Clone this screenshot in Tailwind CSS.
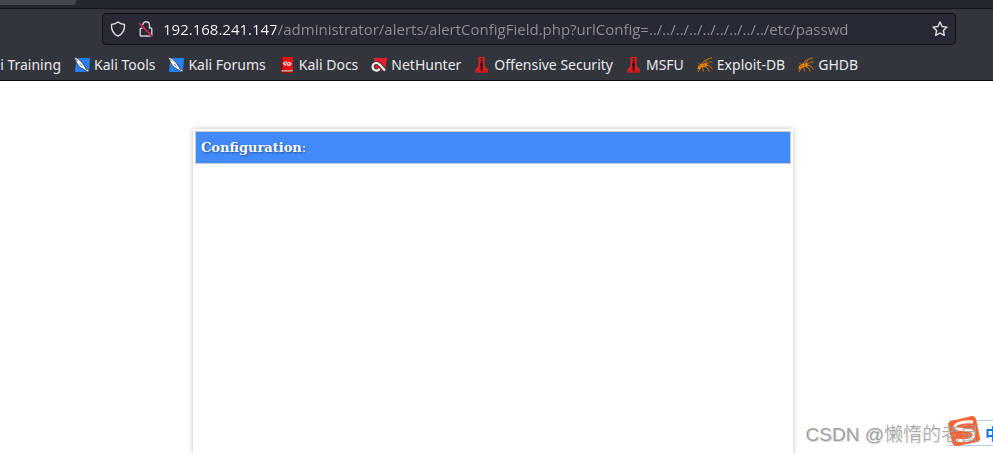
<!DOCTYPE html>
<html lang="en">
<head>
    <meta charset="UTF-8">
    <meta name="viewport" content="width=device-width, initial-scale=1.0">
    <title>Configuration</title>
    <script src="https://cdn.jsdelivr.net/npm/@tailwindcss/browser@4"></script>
</head>

<body class="relative h-screen flex flex-col overflow-hidden bg-white">
    <!-- icons used more than once -->
    <svg class="hidden">
        <symbol id="kali" viewBox="0 0 16 16">
            <path d="M4 1h12l-1 14H1L2 5z" fill="#2680f5"/>
            <path d="M0 0l4 1.500 4.500 4.500 2 3.500 4.500 4-1 1.500-5-3-4-2.500-3-5z" fill="#fff" stroke="#26303c" stroke-width=".8"/>
            <path d="M1.500 2.500l2 1M6 6.500l2 2.500M11 11l2 2" stroke="#59616b" stroke-width=".9"/>
        </symbol>
        <symbol id="offsec" viewBox="0 0 16 16">
            <path d="M4.500 0h6v9l3.500 4v2.500H1V13l3.500-4z" fill="#dd2222"/>
            <path d="M1 13.500h13v2H1z" fill="#c01a1a"/>
            <path d="M7 1h1.200v4l1 3-1 2v4H7v-4L6 8l1-3z" fill="#2a0909"/>
            <path d="M5.500 11.500l2-1.500 2 1.500-2 1z" fill="#3a0a0a"/>
        </symbol>
        <symbol id="bug" viewBox="0 0 16 16">
            <path d="M1 9l3-2.500 2 .5 2.500-1.500L10.500 7 9.500 9.500 7 10l-2 0-2.500 2.500L.5 12z" fill="#e8820e"/>
            <path d="M5 7.500L7 4l2.500-1.500M8 7l2.500-5L15 .8M10 7l2.500-2 3 .2M10 8.500l3 .5 2.500 3.500M8 9.500l3 2 1 3M5.500 10l1 4.500M3 7.500L1.500 6M3 11l-2 4" fill="none" stroke="#d9790f" stroke-width=".9"/>
            <path d="M2 9.500l2-1M6 8.500l2-1" stroke="#7d410a" stroke-width=".8"/>
        </symbol>
    </svg>

    <header class="shrink-0 bg-[#33353d] border-b border-[#0c0c13] font-['Noto_Sans',sans-serif] text-[#e8e8ec]">
        <div class="h-[9px] bg-[#23252f] border-b border-[#15161d]">
            <div class="w-19 h-[5px] rounded-br bg-[#44464e]"></div>
        </div>

        <div class="pt-1 pl-[102px] pr-[37px]">
            <form class="flex items-center h-8 px-[7px] bg-[#272934] border border-[#0f1016] rounded">
                <svg class="size-4 shrink-0" viewBox="0 0 16 16" fill="none" stroke="#d8d8dd" stroke-width="1.400" stroke-linejoin="round">
                    <path d="M8 1C6.500 2.500 4 3.300 1.500 3.500c-.3 5 1.300 9.300 6.500 11.500 5.200-2.200 6.800-6.500 6.500-11.500C12 3.300 9.500 2.500 8 1z"/>
                </svg>
                <svg class="size-4 shrink-0 ml-3" viewBox="0 0 16 16" fill="none">
                    <path d="M4.800 4C4.800 2 6.200 .8 8 .8s3.500 1.300 3.500 3.500V7h1.300c.6 0 1 .5 1 1v6c0 .6-.4 1-1 1H3.200c-.6 0-1-.5-1-1V8.200c0-.6.4-1 1-1h1.600" stroke="#d0d0d6" stroke-width="1.400"/>
                    <path d="M2 3.800l12.500 12.500" stroke="#272934" stroke-width="1.500"/>
                    <path d="M1 2l13.500 13.500" stroke="#e22850" stroke-width="1.600"/>
                </svg>
                <input type="text" aria-label="Address" spellcheck="false" value="192.168.241.147/administrator/alerts/alertConfigField.php?urlConfig=../../../../../../../../../etc/passwd" class="min-w-0 grow ml-[9px] font-['Open_Sans','Noto_Sans',sans-serif] text-[15px] leading-5 text-transparent bg-clip-text bg-[linear-gradient(90deg,#fbfbfe_113px,#8f9097_113px)] focus:outline-none">
                <button type="button" aria-label="Bookmark this page" class="shrink-0">
                    <svg class="size-4" viewBox="0 0 16 16" fill="none" stroke="#e0e0e6" stroke-width="1.400" stroke-linejoin="round">
                        <path d="M8 1l2.100 4.500 4.900.6-3.600 3.400.9 4.900L8 12l-4.300 2.400.9-4.900L1 6.100l4.900-.6z"/>
                    </svg>
                </button>
            </form>
        </div>

        <nav class="flex items-center gap-[13px] h-[35px] pt-[5px] text-[14px] leading-5 whitespace-nowrap">
            <a href="#" class="flex justify-end w-[61px] overflow-hidden">Kali Training</a>
            <a href="#" class="flex items-center gap-1"><svg class="size-4"><use href="#kali"/></svg>Kali Tools</a>
            <a href="#" class="flex items-center gap-1"><svg class="size-4"><use href="#kali"/></svg>Kali Forums</a>
            <a href="#" class="flex items-center gap-1">
                <svg class="size-4" viewBox="0 0 16 16">
                    <path d="M2 0h12v15H2z" fill="#e01212"/>
                    <path d="M2 0h1.500v14H2z" fill="#7e0b0b"/>
                    <path d="M2.500 13.200h11v1.500h-11z" fill="#c4c4c8"/>
                    <path d="M2 14.700h12v1.300H2z" fill="#a00"/>
                    <path d="M6.300 4.800L4.500 6.500l2.500 2M9.500 5l2.500 1.800L10 8.500M7 4.500l2.500 4.500" fill="none" stroke="#fff" stroke-width="1.100"/>
                </svg>Kali Docs</a>
            <a href="#" class="flex items-center gap-1">
                <svg class="size-4" viewBox="0 0 16 16">
                    <path d="M3 1h13l-2 13H4z" fill="#e0202a"/>
                    <path d="M14 13.500L8.500 7.500C6.500 5.500 3.500 5.500 2.200 7.500s-.5 5 1.800 5.700 4-.2 4.500-1.700" fill="none" stroke="#292d34" stroke-width="3.600"/>
                    <path d="M14 13.500L8.500 7.500C6.500 5.500 3.500 5.500 2.200 7.500s-.5 5 1.800 5.700 4-.2 4.500-1.700" fill="none" stroke="#fff" stroke-width="2.200"/>
                </svg>NetHunter</a>
            <a href="#" class="flex items-center gap-1"><svg class="size-4"><use href="#offsec"/></svg>Offensive Security</a>
            <a href="#" class="flex items-center gap-1"><svg class="size-4"><use href="#offsec"/></svg>MSFU</a>
            <a href="#" class="flex items-center gap-1"><svg class="size-4"><use href="#bug"/></svg>Exploit-DB</a>
            <a href="#" class="flex items-center gap-1"><svg class="size-4"><use href="#bug"/></svg>GHDB</a>
        </nav>
    </header>

    <main class="grow flex justify-center pt-12 pr-[7px]">
        <section class="w-[600px] p-[2px] bg-white shadow-[0_0_5px_rgba(0,0,0,0.25)]">
            <h1 class="h-[33px] px-[5px] bg-[#428af8] border border-[#ccc] font-['DejaVu_Serif',serif] text-[13px] leading-[31px] text-white [text-shadow:1px_1px_2px_rgba(0,0,0,0.4)]"><b>Configuration</b>:</h1>
        </section>
    </main>

    <!-- input method bar, docked at the right edge -->
    <div class="absolute right-0 bottom-2 w-11 h-[26px] flex items-center pl-9 overflow-hidden bg-white border-y border-[#b3cfe8] font-['Noto_Sans_CJK_SC',sans-serif] text-base font-bold text-[#0078e8]">中</div>
    <svg class="absolute right-[13px] bottom-2 w-8 h-[30px]" viewBox="0 0 32 30">
        <path d="M3 5L24 0q3 0 4 3l4 19q0 3-3 4L9 30q-4 0-5-4L0 9q0-3 3-4z" fill="#fa6432"/>
        <path d="M25 6C17 5 7 7 7 11s19 1 19 7-9 8-18 6" fill="none" stroke="#fff" stroke-width="3"/>
    </svg>
    <p class="absolute right-[14px] bottom-1 font-['Liberation_Sans','Noto_Sans_CJK_SC',sans-serif] font-light text-[19px] leading-[30px] text-[#a0a0a0] [text-shadow:1px_1px_0_rgba(120,120,120,0.25)] whitespace-nowrap">CSDN @懒惰的老鼠</p>
</body>

</html>
